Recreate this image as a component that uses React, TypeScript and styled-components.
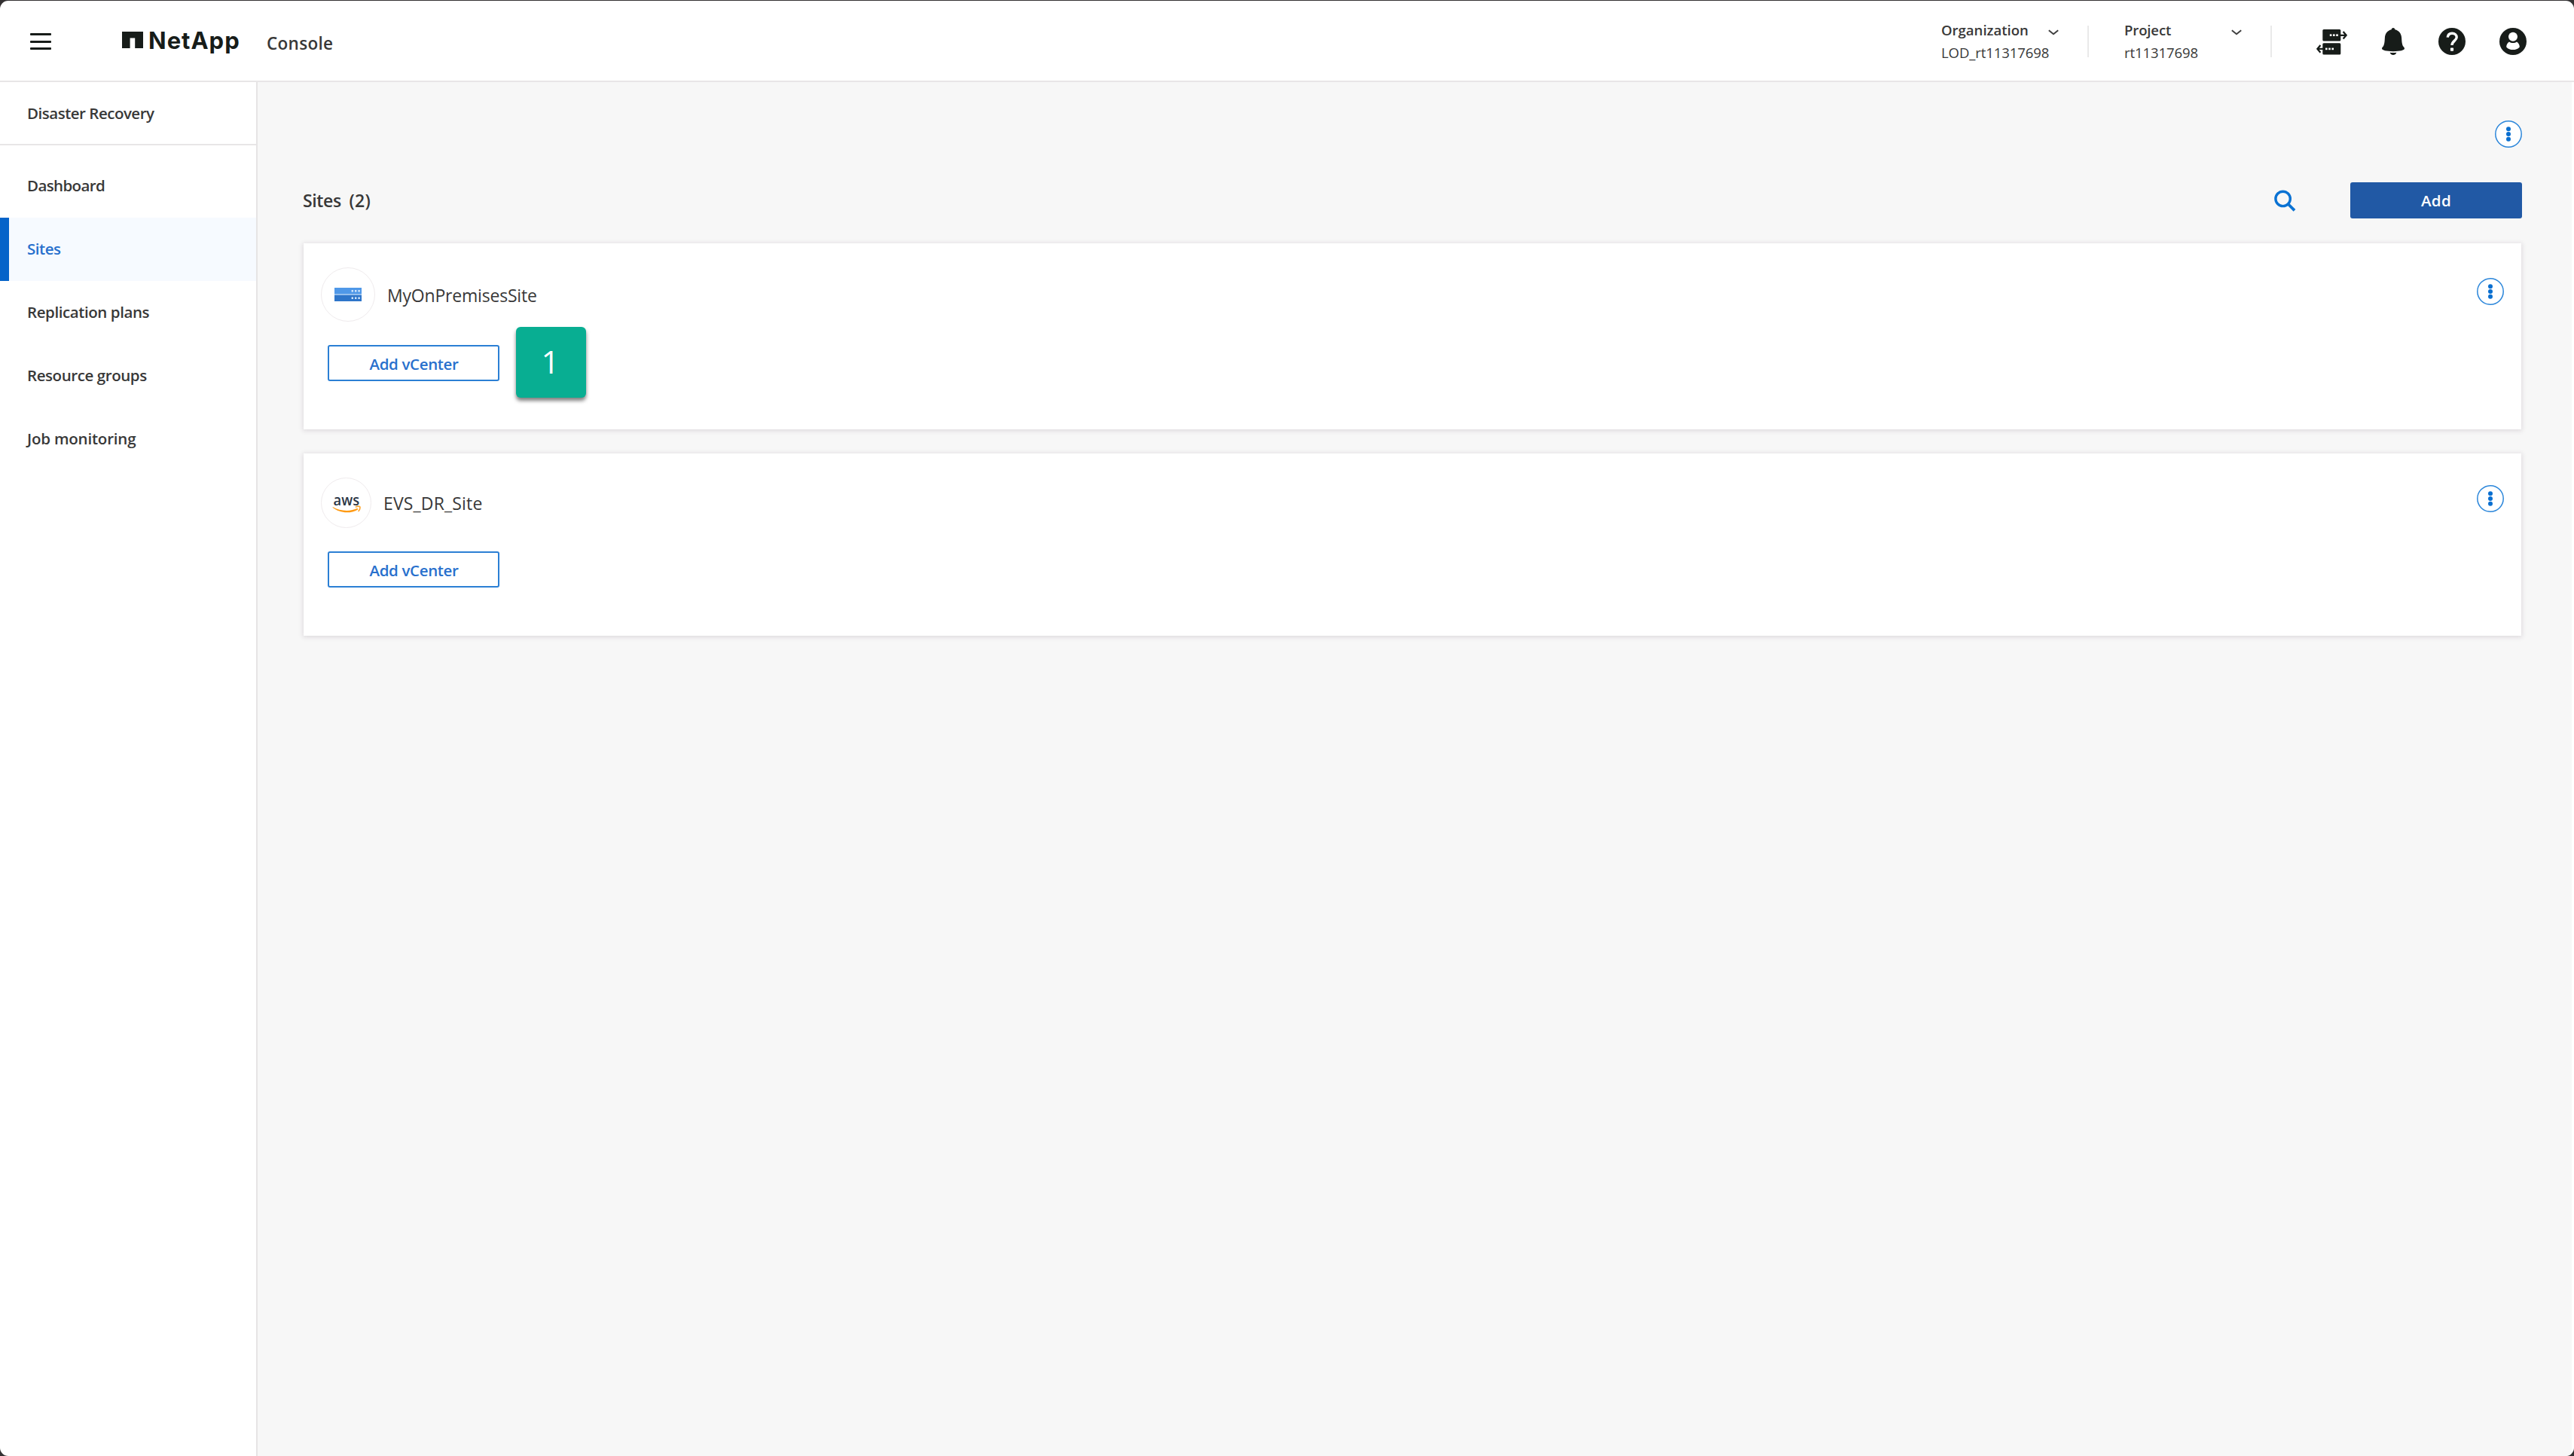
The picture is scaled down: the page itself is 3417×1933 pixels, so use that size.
import * as React from 'react'
import styled, { createGlobalStyle } from 'styled-components'

const navItems = [
  { label: 'Dashboard', spacing: -0.62 },
  { label: 'Sites', active: true, spacing: -0.48 },
  { label: 'Replication plans', spacing: -0.42 },
  { label: 'Resource groups', spacing: -0.42 },
  { label: 'Job monitoring', spacing: -0.2 },
]

const Kebab = () => (
  <svg width="36" height="36" viewBox="0 0 36 36">
    <circle cx="18" cy="18" r="17.2" fill="#fff" stroke="#2b86da" strokeWidth="1.5" />
    <g fill="#0a6fd0">
      <circle cx="18" cy="11.2" r="3" />
      <circle cx="18" cy="18" r="3" />
      <circle cx="18" cy="24.8" r="3" />
    </g>
  </svg>
)

const Chevron = () => (
  <svg width="14" height="8" viewBox="0 0 14 8">
    <path d="M0.8 1.2 L7 6.2 L13.2 1.2" fill="none" stroke="#404040" strokeWidth="2" />
  </svg>
)

const ConnectorIcon = () => (
  <svg width="42" height="36" viewBox="0 0 42 36">
    <g fill="#171c19">
      <rect x="8.3" y="2" width="24" height="15.6" rx="1.5" />
      <rect x="8.3" y="20.2" width="24" height="15.4" rx="1.5" />
    </g>
    <g fill="none" stroke="#171c19" strokeWidth="2.3">
      <path d="M32 9.8 H39.5 M35.6 5 L39.6 9.8 L35.6 14.6" />
      <path d="M9 27.9 H1.5 M5.4 23.1 L1.4 27.9 L5.4 32.7" />
    </g>
    <g fill="#fff">
      <rect x="17.8" y="8.4" width="2.6" height="2.6" />
      <rect x="22" y="8.4" width="2.6" height="2.6" />
      <rect x="26.2" y="8.4" width="2.6" height="2.6" />
      <rect x="12" y="26.6" width="2.6" height="2.6" />
      <rect x="16.2" y="26.6" width="2.6" height="2.6" />
      <rect x="20.4" y="26.6" width="2.6" height="2.6" />
    </g>
  </svg>
)

const BellIcon = () => (
  <svg width="30" height="36" viewBox="0 0 30 36">
    <g fill="#171c19">
      <path d="M15 0 C16.4 0 17.3 1 17.3 2.2 C22.6 3.4 25.8 7.6 26.1 13 C26.4 18.6 26.6 21.8 28.2 24.4 C29.2 25.6 30 26.2 30 27.6 C30 29.8 24 31.2 15 31.2 C6 31.2 0 29.8 0 27.6 C0 26.2 0.8 25.6 1.8 24.4 C3.4 21.8 3.6 18.6 3.9 13 C4.2 7.6 7.4 3.4 12.7 2.2 C12.7 1 13.6 0 15 0 Z" />
      <path d="M10.6 32.7 C13.4 33.1 16.6 33.1 19.4 32.7 C18.6 35 16.8 36 15 36 C13.2 36 11.4 35 10.6 32.7 Z" />
    </g>
  </svg>
)

const HelpIcon = () => (
  <svg width="36" height="36" viewBox="0 0 36 36">
    <circle cx="18" cy="18" r="18" fill="#171c19" />
    <path
      d="M12.2 12.6 C12.6 9 15 7.2 18.2 7.2 C21.8 7.2 24.2 9.4 24.2 12.4 C24.2 17 18 17.4 18 23"
      fill="none"
      stroke="#fff"
      strokeWidth="3.4"
    />
    <rect x="15.9" y="26.6" width="4.2" height="4.2" rx="0.8" fill="#fff" />
  </svg>
)

const UserIcon = () => (
  <svg width="36" height="36" viewBox="0 0 36 36">
    <circle cx="18" cy="18" r="18" fill="#171c19" />
    <circle cx="18" cy="11.8" r="6" fill="#fff" />
    <path
      d="M13 18.6 C15.8 20.6 20.2 20.6 23 18.6 C25.4 20 26.8 22.6 26.8 25.4 C24.4 28 21.4 29 18 29 C14.6 29 11.6 28 9.2 25.4 C9.2 22.6 10.6 20 13 18.6 Z"
      fill="#fff"
    />
  </svg>
)

const SearchIcon = () => (
  <svg width="29" height="29" viewBox="0 0 29 29">
    <circle cx="11.6" cy="11.9" r="9.7" fill="none" stroke="#0a72d3" strokeWidth="3.4" />
    <path d="M18.6 19 L27 27.4" stroke="#0a72d3" strokeWidth="3.8" />
  </svg>
)

const ServerIcon = () => (
  <svg width="36" height="18" viewBox="0 0 36 18">
    <rect width="36" height="18" fill="#a9cdf2" />
    <rect width="36" height="8.2" fill="#4f98e8" />
    <rect y="9.8" width="36" height="8.2" fill="#2e75c9" />
    <g fill="#cfe4fa">
      <rect x="22.6" y="3" width="2.4" height="2.6" />
      <rect x="27" y="3" width="2.4" height="2.6" />
      <rect x="31.4" y="3" width="2.4" height="2.6" />
      <rect x="22.6" y="12.4" width="2.4" height="2.6" />
      <rect x="27" y="12.4" width="2.4" height="2.6" />
      <rect x="31.4" y="12.4" width="2.4" height="2.6" />
    </g>
  </svg>
)

const AwsIcon = () => (
  <svg width="38" height="38" viewBox="0 0 38 38">
    <text
      x="1.6"
      y="21.6"
      fill="#2b3645"
      fontFamily="Open Sans, sans-serif"
      fontSize="20"
      fontWeight="600"
      textLength="34.5"
      lengthAdjust="spacingAndGlyphs"
    >
      aws
    </text>
    <g transform="translate(0 7)">
      <path d="M0.8 17 C11 23 24 23.4 33.6 18.8 L34.2 20.4 C24 26.4 9.6 25.4 0.6 17.8 Z" fill="#ff9a12" />
      <path d="M30.8 17.4 C33 16.2 35.8 16 36.8 16.8 C37.2 18.4 36.4 21.2 34.6 23" fill="none" stroke="#ffa62e" strokeWidth="1.6" />
    </g>
  </svg>
)

const App = () => {
  return (
    <>
      <GlobalStyle />
      <Window>
        <Header>
          <Hamburger>
            <span />
            <span />
            <span />
          </Hamburger>
          <Logo>
            <svg width="28" height="22" viewBox="0 0 28 22">
              <path d="M0 0 H28 V22 H17.2 V8.4 H10.6 V22 H0 Z" fill="#171c19" />
            </svg>
            <LogoText>NetApp</LogoText>
          </Logo>
          <Product>Console</Product>
          <HeaderRight>
            <Selector>
              <div>
                <SelectorLabel $spacing={0.02}>Organization</SelectorLabel>
                <SelectorValue>LOD_rt11317698</SelectorValue>
              </div>
              <Chevron />
            </Selector>
            <Selector>
              <div>
                <SelectorLabel $spacing={-0.11}>Project</SelectorLabel>
                <SelectorValue>rt11317698</SelectorValue>
              </div>
              <Chevron />
            </Selector>
            <HeaderIcons>
              <ConnectorIcon />
              <BellIcon />
              <HelpIcon />
              <UserIcon />
            </HeaderIcons>
          </HeaderRight>
        </Header>
        <Body>
          <Sidebar>
            <SidebarTitle>Disaster Recovery</SidebarTitle>
            <Nav>
              {navItems.map(item => (
                <NavItem key={item.label} $active={item.active} $spacing={item.spacing}>
                  {item.label}
                </NavItem>
              ))}
            </Nav>
          </Sidebar>
          <Main>
            <PageActions>
              <Kebab />
            </PageActions>
            <Toolbar>
              <Heading>
                Sites <span>(2)</span>
              </Heading>
              <ToolbarRight>
                <SearchIcon />
                <PrimaryButton>Add</PrimaryButton>
              </ToolbarRight>
            </Toolbar>
            <Card $height={247}>
              <CardHeader $lift={9}>
                <SiteLogo $size={72}>
                  <ServerIcon />
                </SiteLogo>
                <SiteName $spacing={-0.2}>MyOnPremisesSite</SiteName>
                <Kebab />
              </CardHeader>
              <CardActions>
                <OutlineButton>Add vCenter</OutlineButton>
                <StepBadge>1</StepBadge>
              </CardActions>
            </Card>
            <Card $height={242}>
              <CardHeader $lift={11}>
                <SiteLogo $size={67}>
                  <AwsIcon />
                </SiteLogo>
                <SiteName $spacing={0.17}>EVS_DR_Site</SiteName>
                <Kebab />
              </CardHeader>
              <CardActions>
                <OutlineButton>Add vCenter</OutlineButton>
              </CardActions>
            </Card>
          </Main>
        </Body>
      </Window>
    </>
  )
}

export default App

const GlobalStyle = createGlobalStyle`
  * {
    box-sizing: border-box;
  }
  body {
    margin: 0;
    background: #333132;
    font-family: "Open Sans", "Noto Sans", sans-serif;
    color: #383838;
  }
  svg {
    display: block;
    flex: none;
  }
`

const Window = styled.div`
  display: flex;
  flex-direction: column;
  width: 100%;
  height: calc(100vh - 1px);
  margin-top: 1px;
  border-radius: 11px;
  overflow: hidden;
  background: #fff;
`

const Header = styled.header`
  display: flex;
  flex: none;
  height: 108px;
  padding: 0 63px 0 40px;
  border-bottom: 2px solid #e8e6e7;
`

const Hamburger = styled.div`
  display: flex;
  flex-direction: column;
  justify-content: space-between;
  width: 28px;
  height: 22px;
  margin-top: 43px;

  span {
    height: 3px;
    border-radius: 1px;
    background: #171c19;
  }
`

const Logo = styled.div`
  display: flex;
  width: 192px;
  margin-left: 94px;
  padding-top: 41px;
`

const LogoText = styled.span`
  margin: -7px 0 0 7px;
  font-family: Inter, sans-serif;
  font-size: 31px;
  font-weight: 700;
  line-height: 38px;
  letter-spacing: 1px;
  color: #171c19;
`

const Product = styled.div`
  margin-top: 41px;
  font-size: 22.5px;
  font-weight: 600;
  line-height: 32px;
  letter-spacing: 0.3px;
`

const HeaderRight = styled.div`
  display: flex;
  margin-left: auto;
`

const Selector = styled.div`
  display: flex;
  justify-content: space-between;
  width: 243px;
  height: 42px;
  margin-top: 33px;
  padding: 0 38px 0 48px;
  border-right: 2px solid #e9e9e9;

  svg {
    margin-top: 5px;
  }
`

const SelectorLabel = styled.div<{ $spacing: number }>`
  margin: -9px 0 0 -1px;
  font-size: 18.5px;
  font-weight: 600;
  line-height: 30px;
  letter-spacing: ${p => p.$spacing}px;
`

const SelectorValue = styled.div`
  width: 120px;
  margin-left: -1px;
  font-size: 18.5px;
  line-height: 30px;
  letter-spacing: -0.07px;
`

const HeaderIcons = styled.div`
  display: flex;
  gap: 45px;
  margin: 36px 0 0 59px;
`

const Body = styled.div`
  display: flex;
  flex: 1;
`

const Sidebar = styled.aside`
  flex: none;
  width: 342px;
  border-right: 2px solid #e6e4e5;
`

const SidebarTitle = styled.div`
  height: 84px;
  padding-left: 36px;
  border-bottom: 2px solid #e8e6e7;
  font-size: 20.5px;
  font-weight: 600;
  line-height: 83px;
  letter-spacing: -0.49px;
`

const Nav = styled.nav`
  padding-top: 12px;
`

const NavItem = styled.div<{ $active?: boolean; $spacing: number }>`
  height: 84px;
  padding-left: ${p => (p.$active ? 24 : 36)}px;
  border-left: ${p => (p.$active ? '12px solid #0563c9' : 'none')};
  background: ${p => (p.$active ? '#f6faff' : '#fff')};
  color: ${p => (p.$active ? '#2870cd' : '#383838')};
  font-size: 20.5px;
  font-weight: 600;
  line-height: 83px;
  letter-spacing: ${p => p.$spacing}px;
`

const Main = styled.main`
  flex: 1;
  margin-right: 3px;
  padding: 51px 66px 0 61px;
  background: #f7f7f7;
`

const PageActions = styled.div`
  display: flex;
  justify-content: flex-end;
`

const Toolbar = styled.div`
  display: flex;
  justify-content: space-between;
  margin: 46px 0 33px;
`

const Heading = styled.h1`
  margin: 0 0 0 -1px;
  font-size: 23px;
  font-weight: 600;
  line-height: 49px;
  height: 48px;
  letter-spacing: -0.35px;

  span {
    margin-left: 5px;
    letter-spacing: 0.28px;
  }
`

const ToolbarRight = styled.div`
  display: flex;
  align-items: center;
  gap: 72px;
`

const PrimaryButton = styled.button`
  width: 228px;
  height: 48px;
  padding: 0;
  border: none;
  border-radius: 3px;
  background: #2159a5;
  color: #fff;
  font-family: inherit;
  font-size: 20.5px;
  font-weight: 600;
  letter-spacing: 0.34px;
`

const Card = styled.section<{ $height: number }>`
  height: ${p => p.$height}px;
  margin: 0 1px 32px 0;
  padding: 32px 23px 0;
  background: #fff;
  box-shadow: 0 1px 6px 1px rgba(70, 40, 70, 0.14);
`

const CardHeader = styled.div<{ $lift: number }>`
  display: flex;
  align-items: center;

  > svg {
    margin: 0 0 ${p => p.$lift}px auto;
  }
`

const SiteLogo = styled.div<{ $size: number }>`
  display: flex;
  align-items: center;
  justify-content: center;
  width: ${p => p.$size}px;
  height: ${p => p.$size}px;
  border: 1.5px solid #efebed;
  border-radius: 50%;
`

const SiteName = styled.div<{ $spacing: number }>`
  margin: 1px 0 0 16px;
  font-size: 23px;
  letter-spacing: ${p => p.$spacing}px;
`

const CardActions = styled.div`
  position: relative;
  display: flex;
  margin: 31px 0 0 9px;
`

const OutlineButton = styled.button`
  width: 228px;
  height: 48px;
  padding: 2px 0 0 1px;
  border: 2px solid #2b7fd4;
  border-radius: 3px;
  background: #fff;
  color: #2870cd;
  font-family: inherit;
  font-size: 20.5px;
  font-weight: 600;
  letter-spacing: -0.36px;
`

const StepBadge = styled.div`
  position: absolute;
  top: -24px;
  left: 250px;
  width: 93px;
  height: 94px;
  padding-right: 2px;
  border-radius: 6px;
  background: #08ae92;
  box-shadow: 0 4px 5px rgba(0, 0, 0, 0.5);
  color: #fff;
  font-size: 42px;
  line-height: 91px;
  text-align: center;
`
